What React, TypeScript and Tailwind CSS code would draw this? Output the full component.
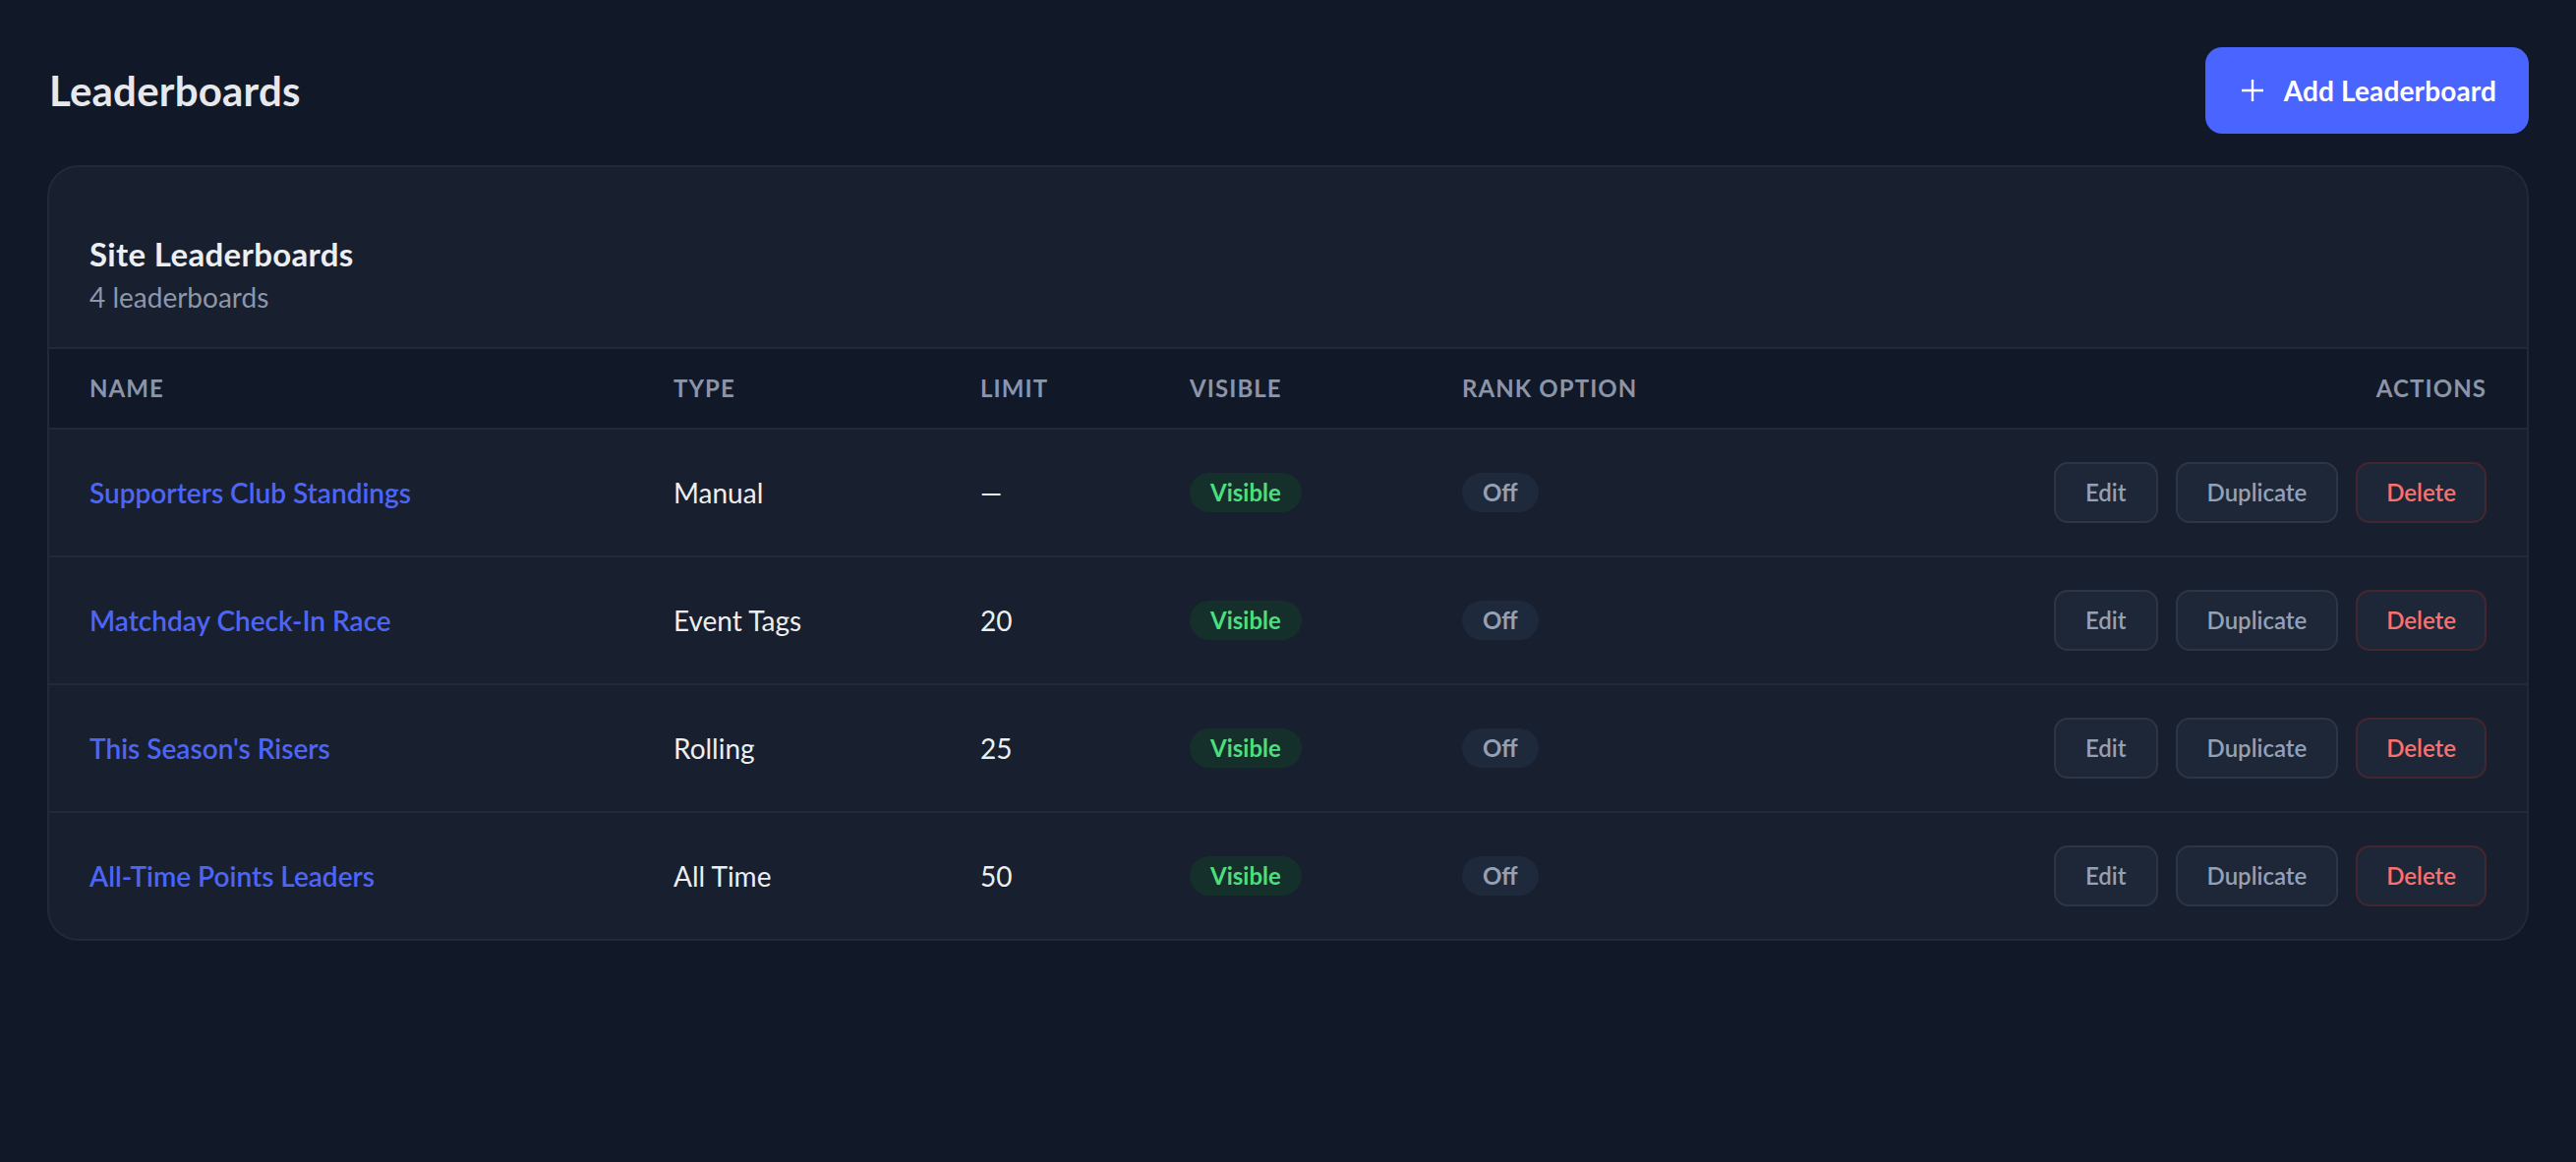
import React from "react";

type Row = {
  name: string;
  type: string;
  limit: string;
};

const rows: Row[] = [
  { name: "Supporters Club Standings", type: "Manual", limit: "—" },
  { name: "Matchday Check-In Race", type: "Event Tags", limit: "20" },
  { name: "This Season's Risers", type: "Rolling", limit: "25" },
  { name: "All-Time Points Leaders", type: "All Time", limit: "50" },
];

const gridCols = "grid grid-cols-[594px_312px_213px_277px_1fr_auto]";

function PlusIcon() {
  return (
    <svg width="22" height="22" viewBox="0 0 22 22" fill="none">
      <path d="M11 0v22M0 11h22" stroke="white" strokeWidth="2.4" />
    </svg>
  );
}

function ActionButton({ label, danger }: { label: string; danger?: boolean }) {
  return (
    <button
      className={
        danger
          ? "h-[62px] px-[29px] rounded-[14px] border-2 border-[#45262f] bg-[#1e2737] text-[24px] font-semibold text-[#f87171]"
          : "h-[62px] px-[30px] rounded-[14px] border-2 border-[#2c3646] bg-[#1e2737] text-[24px] font-semibold text-[#94a0b4]"
      }
    >
      {label}
    </button>
  );
}

export default function App() {
  return (
    <div className="min-h-screen bg-[#111827] px-[48px] pt-[48px] font-['Lato',sans-serif]">
      <div className="flex h-[88px] items-center justify-between">
        <h1 className="pl-[2px] text-[42px] font-bold leading-none tracking-[0.005em] text-[#e6e8ec]">Leaderboards</h1>
        <button className="flex h-[88px] items-center gap-[21px] rounded-[17px] bg-[#4a64ff] pl-[37px] pr-[33px] text-[28px] font-bold tracking-[0.005em] text-white">
          <PlusIcon />
          Add Leaderboard
        </button>
      </div>

      <div className="mt-[32px] overflow-hidden rounded-[32px] border-2 border-[#212a39] bg-[#181f2e]">
        <div className="border-b-2 border-[#212a39] px-[41px] pb-[31px] pt-[66px]">
          <h2 className="text-[33px] font-bold leading-[44px] tracking-[0.01em] text-[#eceef1]">Site Leaderboards</h2>
          <p className="mt-[2px] text-[28px] leading-[40px] text-[#8d97a9]">4 leaderboards</p>
        </div>

        <div className={`${gridCols} h-[82px] items-center border-b-2 border-[#212a39] bg-[#111827] text-[24px] font-bold uppercase tracking-[0.045em] text-[#8b95a7]`}>
          <div className="px-[41px]">Name</div>
          <div className="px-[41px]">Type</div>
          <div className="px-[41px]">Limit</div>
          <div className="px-[41px]">Visible</div>
          <div className="px-[41px]">Rank Option</div>
          <div className="px-[41px] text-right">Actions</div>
        </div>

        {rows.map((r, i) => (
          <div
            key={r.name}
            className={`${gridCols} items-center ${i < rows.length - 1 ? "h-[130px] border-b-2 border-[#212a39]" : "h-[128px]"}`}
          >
            <div className="px-[41px] text-[28px] font-semibold text-[#4d65f7]">{r.name}</div>
            <div className="px-[41px] text-[28px] text-[#eceef1]">{r.type}</div>
            <div className="px-[41px] text-[28px] text-[#eceef1]">{r.limit}</div>
            <div className="px-[41px]">
              <span className="inline-flex h-[40px] items-center rounded-full bg-[#15302a] px-[21px] text-[24px] font-bold text-[#4ade80]">
                Visible
              </span>
            </div>
            <div className="px-[41px]">
              <span className="inline-flex h-[40px] items-center rounded-full bg-[#1e293b] px-[21px] text-[24px] font-bold text-[#94a0b4]">
                Off
              </span>
            </div>
            <div className="flex justify-end gap-[18px] px-[41px]">
              <ActionButton label="Edit" />
              <ActionButton label="Duplicate" />
              <ActionButton label="Delete" danger />
            </div>
          </div>
        ))}
      </div>
    </div>
  );
}
